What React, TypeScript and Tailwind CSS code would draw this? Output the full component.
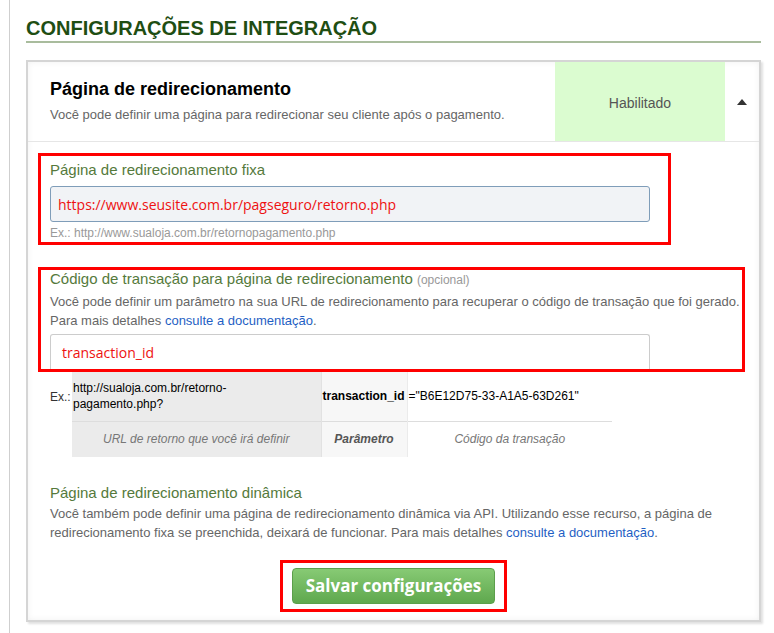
export default function App() {
  return (
    <div className="min-h-[633px] bg-white font-['Liberation_Sans',Arial,sans-serif] text-[#333]">
      <div className="ml-[9px] min-h-[633px] border-l border-[#cfcfcf] pl-4 pr-[13px] pt-[17px]">
        <h1 className="border-b-2 border-[#a9bc9d] pb-[2px] text-[20px] leading-[22px] font-bold text-[#1f4e13]">
          CONFIGURAÇÕES DE INTEGRAÇÃO
        </h1>

        <div className="mt-[17px] border-2 border-[#d5d5d5] shadow-[2px_2px_2px_rgba(0,0,0,0.12),inset_0_0_6px_rgba(0,0,0,0.06)]">
          {/* cabeçalho */}
          <div className="flex h-[80px] border-b border-[#e6e6e6]">
            <div className="flex-1 pl-[22px] pt-[16px]">
              <h2 className="text-[18px] leading-[22px] font-bold text-black">Página de redirecionamento</h2>
              <p className="mt-[6px] text-[13px] leading-[18px] text-[#666]">
                Você pode definir uma página para redirecionar seu cliente após o pagamento.
              </p>
            </div>
            <div className="flex w-[170px] items-center justify-center bg-[#dbfcd0] pt-[4px] text-[14px] text-[#555]">
              Habilitado
            </div>
            <div className="flex w-[34px] items-center justify-center">
              <div className="h-0 w-0 border-x-[5px] border-b-[6px] border-x-transparent border-b-[#333]" />
            </div>
          </div>

          <div className="px-[10px] pt-[11px] pb-[8px]">
            {/* página fixa */}
            <div className="w-[633px] border-[3px] border-[#ff0000] pt-[4px] pb-[1px] pl-[9px]">
              <label className="block text-[15px] leading-[20px] text-[#557a3c]">Página de redirecionamento fixa</label>
              <div className="mt-[6px] flex h-[36px] w-[600px] items-center rounded-[3px] border border-[#7f9db9] bg-[#f1f3f6] pl-[7px] font-['Open_Sans',sans-serif] text-[14px] text-[#ee1111]">
                https://www.seusite.com.br/pagseguro/retorno.php
              </div>
              <p className="mt-[3px] text-[12px] leading-[16px] text-[#999]">
                Ex.: http://www.sualoja.com.br/retornopagamento.php
              </p>
            </div>

            {/* código de transação */}
            <div className="mt-[22px] w-[707px] border-[3px] border-[#ff0000] pl-[9px]">
              <label className="block text-[15px] leading-[18px] text-[#557a3c]">
                Código de transação para página de redirecionamento{' '}
                <span className="text-[12px] text-[#999]">(opcional)</span>
              </label>
              <p className="mt-[3px] text-[13px] leading-[19px] text-[#666]">
                Você pode definir um parâmetro na sua URL de redirecionamento para recuperar o código de transação que foi gerado.
                <br />
                Para mais detalhes <a className="text-[#1f5fc4]">consulte a documentação</a>.
              </p>
              <div className="mt-[4px] flex h-[35px] w-[600px] items-center rounded-t-[3px] border border-b-0 border-[#cccccc] bg-white pl-[11px] font-['Open_Sans',sans-serif] text-[14px] text-[#ee1111]">
                transaction_id
              </div>
            </div>

            {/* exemplo */}
            <table className="ml-[12px] border-collapse text-[12px] leading-[16px]">
              <tbody>
                <tr className="h-[49px]">
                  <td className="w-[22px] align-middle text-[#333]">Ex.:</td>
                  <td className="w-[249px] bg-[#ebebeb] pl-[1px] align-middle text-black">
                    http://sualoja.com.br/retorno-
                    <br />
                    pagamento.php?
                  </td>
                  <td className="w-[86px] border-l border-[#e2e2e2] bg-[#f7f7f7] pl-[1px] align-middle font-bold text-black">
                    transaction_id
                  </td>
                  <td className="w-[205px] border-l border-[#ebebeb] pl-[1px] align-middle text-black">
                    ="B6E12D75-33-A1A5-63D261"
                  </td>
                </tr>
                <tr className="h-[36px]">
                  <td />
                  <td className="border-t border-[#dddddd] bg-[#ebebeb] text-center italic text-[#777]">
                    URL de retorno que você irá definir
                  </td>
                  <td className="border-t border-l border-[#dddddd] border-l-[#e2e2e2] bg-[#f7f7f7] text-center font-bold italic text-[#555]">
                    Parâmetro
                  </td>
                  <td className="border-t border-l border-[#dddddd] border-l-[#ebebeb] text-center italic text-[#777]">
                    Código da transação
                  </td>
                </tr>
              </tbody>
            </table>

            {/* página dinâmica */}
            <div className="mt-[27px] pl-[12px]">
              <h3 className="text-[15px] leading-[18px] text-[#557a3c]">Página de redirecionamento dinâmica</h3>
              <p className="mt-[2px] text-[13px] leading-[19px] text-[#666]">
                Você também pode definir uma página de redirecionamento dinâmica via API. Utilizando esse recurso, a página de
                <br />
                redirecionamento fixa se preenchida, deixará de funcionar. Para mais detalhes{' '}
                <a className="text-[#1f5fc4]">consulte a documentação</a>.
              </p>
            </div>

            <div className="mx-auto mt-[18px] w-fit border-[3px] border-[#ff0000] px-[9px] py-[5px]">
              <button className="flex h-[36px] w-[203px] items-center justify-center rounded-[4px] border border-[#5c9f4b] bg-gradient-to-b from-[#87ca74] to-[#5fa84e] font-['Open_Sans',sans-serif] text-[17px] font-bold text-white">
                Salvar configurações
              </button>
            </div>
          </div>
        </div>
      </div>
    </div>
  )
}
